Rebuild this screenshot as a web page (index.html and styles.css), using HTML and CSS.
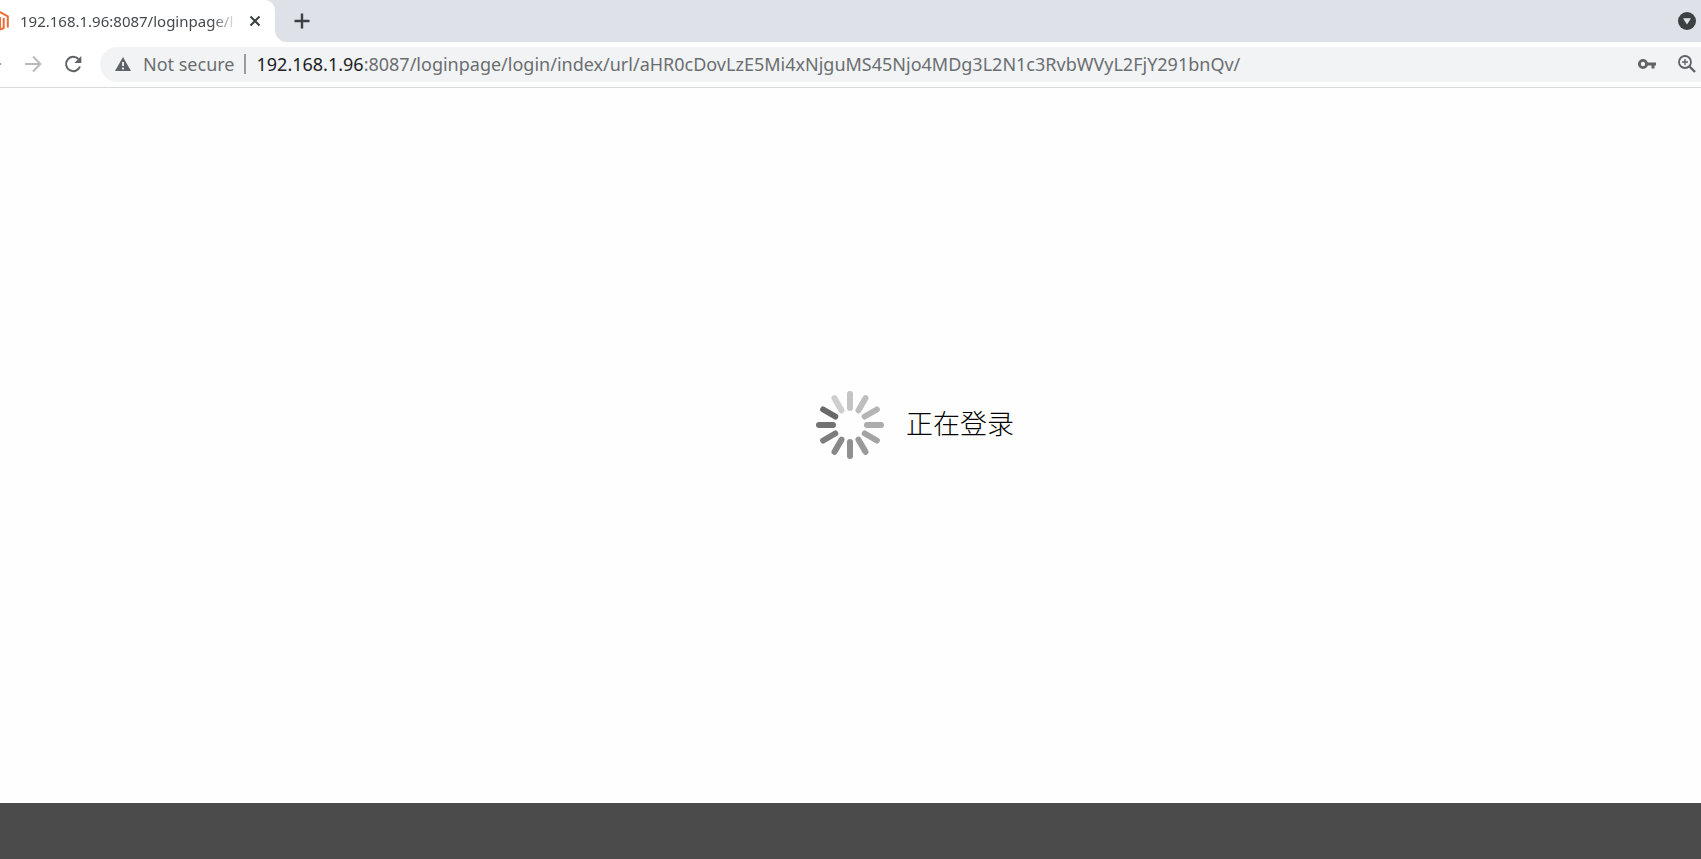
FILE: index.html
```html
<!DOCTYPE html>
<html lang="zh-CN">
<head>
<meta charset="utf-8">
<title>正在登录</title>
<link rel="stylesheet" href="styles.css">
</head>
<body>
<header>
  <div class="tab-strip">
    <div class="tab">
      <svg class="favicon" width="9" height="22" viewBox="0 0 9 22" fill="none" stroke="#ec6c36" stroke-width="2"><path d="M-1 1.5 7.8 6.3v11.2M3.7 8v10L0 19.5M0 7v12"/></svg>
      <span class="tab-title">192.168.1.96:8087/loginpage/l</span>
      <button class="icon-button close" aria-label="Close tab"><svg width="12" height="12" viewBox="0 0 12 12" stroke="#3c4043" stroke-width="2"><path d="m1.5 1.5 9 9m0-9-9 9"/></svg></button>
    </div>
    <button class="icon-button new-tab" aria-label="New tab"><svg width="16" height="16" viewBox="0 0 16 16" stroke="#3c4043" stroke-width="2.4"><path d="M8 .5v15M.5 8h15"/></svg></button>
    <button class="icon-button tab-search" aria-label="Search tabs"><svg width="18" height="18" viewBox="0 0 18 18"><circle cx="9" cy="9" r="9" fill="#3c4043"/><path d="M5 6.3h8L9 12.5z" fill="#dee1e8"/></svg></button>
  </div>
  <div class="toolbar">
    <button class="icon-button back" aria-label="Back"><svg width="2" height="18" viewBox="0 0 2 18"><path d="M0 9h1" stroke="#999" stroke-width="2"/></svg></button>
    <button class="icon-button" aria-label="Forward"><svg width="18" height="18" viewBox="0 0 18 18" fill="none" stroke="#b8babd" stroke-width="2"><path d="M1 9h15M9 1.5 16.3 9 9 16.5"/></svg></button>
    <button class="icon-button reload" aria-label="Reload"><svg width="18" height="18" viewBox="0 0 18 18"><path d="M14.5 4A7.2 7.2 0 1 0 16 11.5" fill="none" stroke="#5f6368" stroke-width="2"/><path d="M17.3 1v7h-7z" fill="#5f6368"/></svg></button>
    <div class="omnibox">
      <button class="security"><svg width="16" height="14" viewBox="0 0 16 14"><path d="M8 0 16 14H0z" fill="#5f6368"/><path d="M8 5v4m0 1.5v2" stroke="#f1f3f4" stroke-width="1.8"/></svg><span>Not secure</span></button>
      <span class="divider"></span>
      <a class="address" href="#"><span class="host">192.168.1.96</span>:8087/loginpage/login/index/url/aHR0cDovLzE5Mi4xNjguMS45Njo4MDg3L2N1c3RvbWVyL2FjY291bnQv/</a>
      <button class="icon-button key" aria-label="Passwords"><svg width="18" height="12" viewBox="0 0 18 12"><circle cx="5" cy="6" r="3.6" fill="none" stroke="#5f6368" stroke-width="2.8"/><path d="M8 4.5h10v3h-1.5v3h-3v-3H8z" fill="#5f6368"/></svg></button>
      <button class="icon-button" aria-label="Zoom"><svg width="18" height="18" viewBox="0 0 18 18" fill="none" stroke="#5f6368"><circle cx="7" cy="7" r="6" stroke-width="1.8"/><path d="m11.5 11.5 5.5 5.5" stroke-width="2.4"/><path d="M7 4v6M4 7h6" stroke-width="1.4"/></svg></button>
    </div>
  </div>
</header>
<main>
  <svg class="spinner" width="70" height="70" viewBox="-35 -35 70 70" stroke-width="6" stroke-linecap="round">
    <path d="M0-17v-14" stroke="#c4c4c4"/>
    <path d="M0-17v-14" stroke="#bebebe" transform="rotate(30)"/>
    <path d="M0-17v-14" stroke="#b5b5b5" transform="rotate(60)"/>
    <path d="M0-17v-14" stroke="#acacac" transform="rotate(90)"/>
    <path d="M0-17v-14" stroke="#a3a3a3" transform="rotate(120)"/>
    <path d="M0-17v-14" stroke="#999" transform="rotate(150)"/>
    <path d="M0-17v-14" stroke="#909090" transform="rotate(180)"/>
    <path d="M0-17v-14" stroke="#888" transform="rotate(210)"/>
    <path d="M0-17v-14" stroke="#7d7d7d" transform="rotate(240)"/>
    <path d="M0-17v-14" stroke="#737373" transform="rotate(270)"/>
    <path d="M0-17v-14" stroke="#696969" transform="rotate(300)"/>
    <path d="M0-17v-14" stroke="#cecece" transform="rotate(330)"/>
  </svg>
  <p class="message">正在登录</p>
</main>
<footer></footer>
</body>
</html>
```
FILE: styles.css
```css
* { box-sizing: border-box; }
body {
  margin: 0;
  min-height: 100vh;
  display: flex;
  flex-direction: column;
  background: #fefefe;
  font-family: "Noto Sans", "Open Sans", sans-serif;
  overflow-x: hidden;
}
button { padding: 0; border: 0; background: none; font: inherit; color: inherit; }
svg { display: block; flex: none; }
.icon-button { display: flex; flex: none; }
.tab-strip {
  display: flex;
  align-items: center;
  height: 42px;
  padding-right: 5px;
  background: #dee1e8;
}
.tab {
  display: flex;
  align-items: center;
  align-self: stretch;
  width: 275px;
  background: #fff;
  border-top-right-radius: 10px;
}
.tab-title {
  width: 218px;
  margin-left: 11px;
  white-space: nowrap;
  font-size: 15px;
  color: #45494d;
  mask-image: linear-gradient(to right, #000 88%, transparent);
}
.close { margin-left: 11px; }
.new-tab {
  align-self: stretch;
  align-items: center;
  padding-left: 19px;
  background: #dee1e8;
  border-bottom-left-radius: 12px;
  box-shadow: -8px 12px 0 4px #fff;
  clip-path: inset(0);
}
.tab-search { margin-left: auto; }
.toolbar {
  display: flex;
  align-items: center;
  height: 46px;
  padding-bottom: 1px;
  background: #fff;
  border-bottom: 1px solid #d9dadc;
}
.back { margin-right: 22px; }
.reload { margin: 0 18px 0 22px; }
.omnibox {
  display: flex;
  flex: 1;
  align-items: center;
  min-width: 0;
  height: 35px;
  padding: 0 5px 0 15px;
  background: #f1f3f4;
  border-radius: 18px 0 0 18px;
  font-size: 18px;
  color: #6b6e71;
}
.security { display: flex; align-items: center; gap: 12px; white-space: nowrap; }
.divider { width: 2px; height: 20px; margin: 0 11px 0 9px; background: #9a9c9f; }
.address {
  flex: 1;
  min-width: 0;
  overflow: hidden;
  white-space: nowrap;
  color: inherit;
  text-decoration: none;
}
.host { color: #202124; }
.key { margin-right: 22px; }
main {
  display: flex;
  flex: 1;
  align-items: center;
  justify-content: center;
  gap: 21px;
  padding: 0 0 42px 128px;
}
.message {
  margin: 0;
  padding-bottom: 4px;
  font-family: "Noto Sans CJK SC", sans-serif;
  font-size: 27px;
  font-weight: 300;
  line-height: 40px;
  color: #000;
}
footer { height: 56px; background: #4b4b4b; }
```
